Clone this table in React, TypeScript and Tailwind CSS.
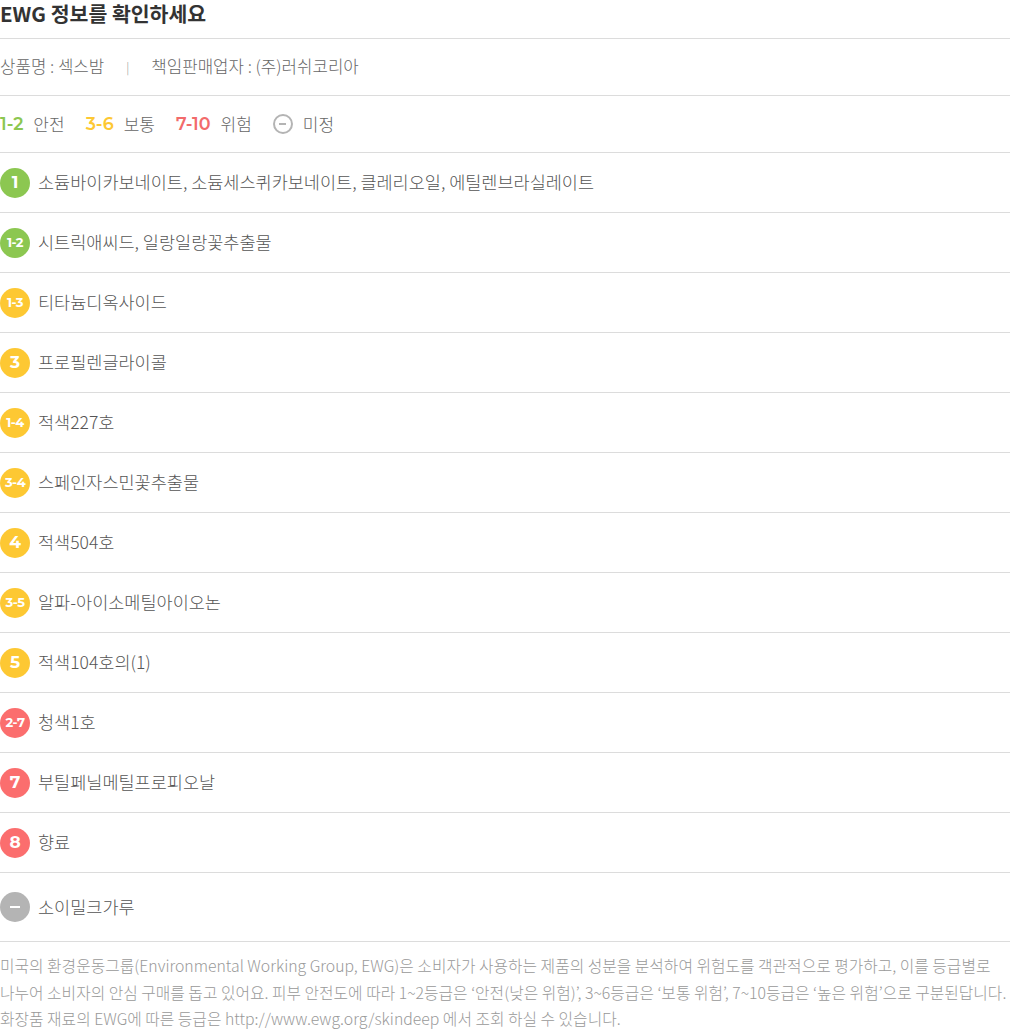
import React from 'react';

type Tone = 'green' | 'yellow' | 'red' | 'gray';

const badgeBg: Record<Tone, string> = {
  green: 'bg-[#8cc751]',
  yellow: 'bg-[#fdc833]',
  red: 'bg-[#fb6e6e]',
  gray: 'bg-[#b4b4b4]',
};

const items: { grade: string; tone: Tone; name: string }[] = [
  { grade: '1', tone: 'green', name: '소듐바이카보네이트, 소듐세스퀴카보네이트, 클레리오일, 에틸렌브라실레이트' },
  { grade: '1-2', tone: 'green', name: '시트릭애씨드, 일랑일랑꽃추출물' },
  { grade: '1-3', tone: 'yellow', name: '티타늄디옥사이드' },
  { grade: '3', tone: 'yellow', name: '프로필렌글라이콜' },
  { grade: '1-4', tone: 'yellow', name: '적색227호' },
  { grade: '3-4', tone: 'yellow', name: '스페인자스민꽃추출물' },
  { grade: '4', tone: 'yellow', name: '적색504호' },
  { grade: '3-5', tone: 'yellow', name: '알파-아이소메틸아이오논' },
  { grade: '5', tone: 'yellow', name: '적색104호의(1)' },
  { grade: '2-7', tone: 'red', name: '청색1호' },
  { grade: '7', tone: 'red', name: '부틸페닐메틸프로피오날' },
  { grade: '8', tone: 'red', name: '향료' },
  { grade: '-', tone: 'gray', name: '소이밀크가루' },
];

const kr = "font-['Noto_Sans_CJK_KR','Noto_Sans',sans-serif]";
const num = "font-['Montserrat','Lato','Noto_Sans',sans-serif]";

const Badge = ({ grade, tone }: { grade: string; tone: Tone }) => (
  <span
    className={`flex w-[30px] h-[30px] shrink-0 items-center justify-center rounded-full text-white font-bold ${num} ${badgeBg[tone]} ${grade.length > 1 ? 'text-[13px] tracking-[-0.5px]' : 'text-[17px]'}`}
  >
    {grade === '-' ? <span className="block w-[10px] h-[2px] bg-white" /> : grade}
  </span>
);

export default function App() {
  return (
    <div className={`w-[1010px] bg-white ${kr} text-[#555]`}>
      <h2 className="h-[38px] pt-[3px] text-[20.5px] font-bold text-[#333] leading-[20px]">EWG 정보를 확인하세요</h2>

      <div className="flex h-[57px] items-center border-t border-[#dcdcdc] text-[16.8px] font-light text-[#666]">
        <span>상품명 : 섹스밤</span>
        <span className="mx-[22px] text-[#999] text-[12px]">|</span>
        <span>책임판매업자 : (주)러쉬코리아</span>
      </div>

      <div className="flex h-[57px] items-center gap-[21px] border-t border-[#dcdcdc] text-[17px] font-light text-[#666]">
        <span className="flex items-center gap-[10px]">
          <b className={`${num} font-semibold text-[#8cc751] text-[17.5px]`}>1-2</b>안전
        </span>
        <span className="flex items-center gap-[10px]">
          <b className={`${num} font-semibold text-[#fdc833] text-[17.5px]`}>3-6</b>보통
        </span>
        <span className="flex items-center gap-[10px]">
          <b className={`${num} font-semibold text-[#f26b6b] text-[17.5px]`}>7-10</b>위험
        </span>
        <span className="flex items-center gap-[10px]">
          <span className="flex w-[20px] h-[20px] items-center justify-center rounded-full border-2 border-[#b4b4b4]">
            <span className="block w-[7px] h-[2px] bg-[#b4b4b4]" />
          </span>
          미정
        </span>
      </div>

      <ul>
        {items.map((it, i) => (
          <li
            key={it.grade + it.name}
            className={`flex items-center gap-[8px] border-t border-[#dcdcdc] text-[17.5px] font-light text-[#555] ${i === items.length - 1 ? 'h-[69px]' : 'h-[60px]'}`}
          >
            <Badge grade={it.grade} tone={it.tone} />
            <span>{it.name}</span>
          </li>
        ))}
      </ul>

      <p className="border-t border-[#dcdcdc] pt-[11px] text-[15.8px] font-light leading-[26.5px] text-[#999]">
        미국의 환경운동그룹(Environmental Working Group, EWG)은 소비자가 사용하는 제품의 성분을 분석하여 위험도를 객관적으로 평가하고, 이를 등급별로
        <br />
        나누어 소비자의 안심 구매를 돕고 있어요. 피부 안전도에 따라 1~2등급은 ‘안전(낮은 위험)’, 3~6등급은 ‘보통 위험’, 7~10등급은 ‘높은 위험’으로 구분된답니다.
        <br />
        화장품 재료의 EWG에 따른 등급은 http://www.ewg.org/skindeep 에서 조회 하실 수 있습니다.
      </p>
    </div>
  );
}
